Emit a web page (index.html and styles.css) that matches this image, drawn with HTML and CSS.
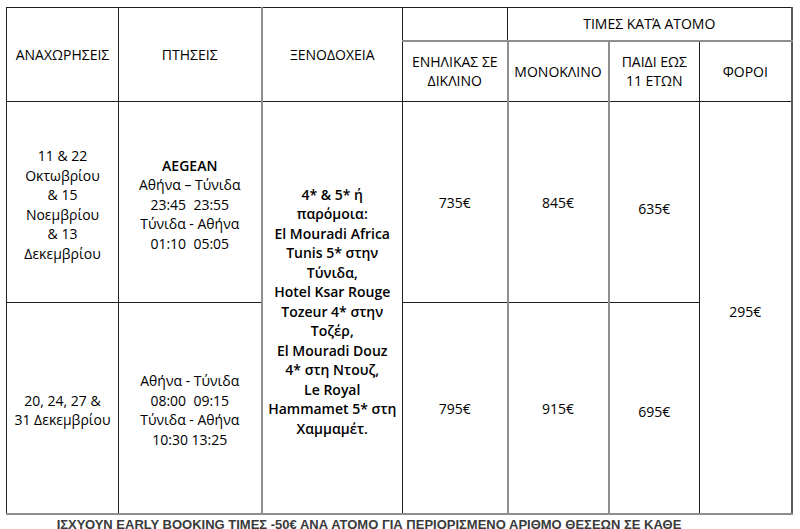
FILE: index.html
```html
<!DOCTYPE html>
<html lang="el">
<head>
<meta charset="utf-8">
<title>Τιμές</title>
<link rel="stylesheet" href="styles.css">
</head>
<body>
<table class="prices">
  <colgroup>
    <col class="c1"><col class="c2"><col class="c3"><col class="c4"><col class="c5"><col class="c6"><col class="c7">
  </colgroup>
  <tr class="h1">
    <td rowspan="2" class="head">ΑΝΑΧΩΡΗΣΕΙΣ</td>
    <td rowspan="2" class="head gr">ΠΤΗΣΕΙΣ</td>
    <td rowspan="2" class="head gl">ΞΕΝΟΔΟΧΕΙΑ</td>
    <td class="head gb"></td>
    <td colspan="3" class="head gb gright">ΤΙΜΕΣ ΚΑΤΆ ΑΤΟΜΟ</td>
  </tr>
  <tr class="h2">
    <td class="head gt gr">ΕΝΗΛΙΚΑΣ ΣΕ<br>ΔΙΚΛΙΝΟ</td>
    <td class="head gt gl gr">ΜΟΝΟΚΛΙΝΟ</td>
    <td class="head gt gl">ΠΑΙΔΙ ΕΩΣ<br>11 ΕΤΩΝ</td>
    <td class="head gt gright">ΦΟΡΟΙ</td>
  </tr>
  <tr class="b1">
    <td class="cell">11 &amp; 22<br>Οκτωβρίου<br>&amp; 15<br>Νοεμβρίου<br>&amp; 13<br>Δεκεμβρίου</td>
    <td class="cell gr"><b class="airline">AEGEAN</b><br>Αθήνα – Τύνιδα<br>23:45&nbsp; 23:55<br>Τύνιδα - Αθήνα<br>01:10&nbsp; 05:05</td>
    <td rowspan="2" class="cell hotels gl gb">4* &amp; 5* ή<br>παρόμοια:<br>El Mouradi Africa<br>Tunis 5* στην<br>Τύνιδα,<br>Hotel Ksar Rouge<br>Tozeur 4* στην<br>Τοζέρ,<br>El Mouradi Douz<br>4* στη Ντουζ,<br>Le Royal<br>Hammamet 5* στη<br>Χαμμαμέτ.</td>
    <td class="price gr">735€</td>
    <td class="price gl gr">845€</td>
    <td class="price low gl">635€</td>
    <td rowspan="2" class="cell tax gb gright">295€</td>
  </tr>
  <tr class="b2">
    <td class="cell gb">20, 24, 27 &amp;<br>31 Δεκεμβρίου</td>
    <td class="cell gr gb">Αθήνα - Τύνιδα<br>08:00&nbsp; 09:15<br>Τύνιδα - Αθήνα<br>10:30 13:25</td>
    <td class="price gr gb">795€</td>
    <td class="price gl gr gb">915€</td>
    <td class="price low2 gl gb">695€</td>
  </tr>
</table>
<p class="note">ΙΣΧΥΟΥΝ EARLY BOOKING ΤΙΜΕΣ -50€ ΑΝΑ ΑΤΟΜΟ ΓΙΑ ΠΕΡΙΟΡΙΣΜΕΝΟ ΑΡΙΘΜΟ ΘΕΣΕΩΝ ΣΕ ΚΑΘΕ<br>ΑΝΑΧΩΡΗΣΗ</p>
</body>
</html>
```
FILE: styles.css
```css
html, body {
  margin: 0;
  padding: 0;
  background: #ffffff;
}

body {
  font-family: "Open Sans", "Noto Sans", sans-serif;
  color: #000000;
  overflow: hidden;
}

.prices {
  border-collapse: collapse;
  table-layout: fixed;
  width: 786px;
  margin: 7px 0 0 6px;
  font-size: 14px;
  line-height: 19.5px;
}

.c1 { width: 112px; }
.c2 { width: 143px; }
.c3 { width: 141px; }
.c4 { width: 105px; }
.c5 { width: 101px; }
.c6 { width: 91px; }
.c7 { width: 92px; }

.h1 { height: 33px; }
.h2 { height: 61px; }
.b1 { height: 201px; }
.b2 { height: 211px; }

.prices td {
  border: 1px solid #1e1e1e;
  text-align: center;
  vertical-align: middle;
  padding: 0 3px;
}

.prices td.gl { border-left: 2px solid #8e8e8e; }
.prices td.gr { border-right: 2px solid #8e8e8e; }
.prices td.gt { border-top: 2px solid #8e8e8e; }
.prices td.gb { border-bottom: 2px solid #8e8e8e; }
.prices td.gright { border-right: 2px solid #5a5a5a; }

.airline { font-weight: 600; }

.prices td.cell { padding-top: 5px; }
.prices td.hotels { padding-top: 8px; font-weight: 600; }
.prices td.tax { padding-top: 8px; }
.prices td.price { padding-top: 1px; }
.prices td.low { padding-top: 13px; }
.prices td.low2 { padding-top: 7px; }

.note {
  margin: 3px 0 0 6px;
  width: 726px;
  text-align: center;
  font-family: "Liberation Sans", Arial, sans-serif;
  font-weight: 700;
  font-size: 13px;
  line-height: 14px;
  color: #3a3a3a;
}
```
